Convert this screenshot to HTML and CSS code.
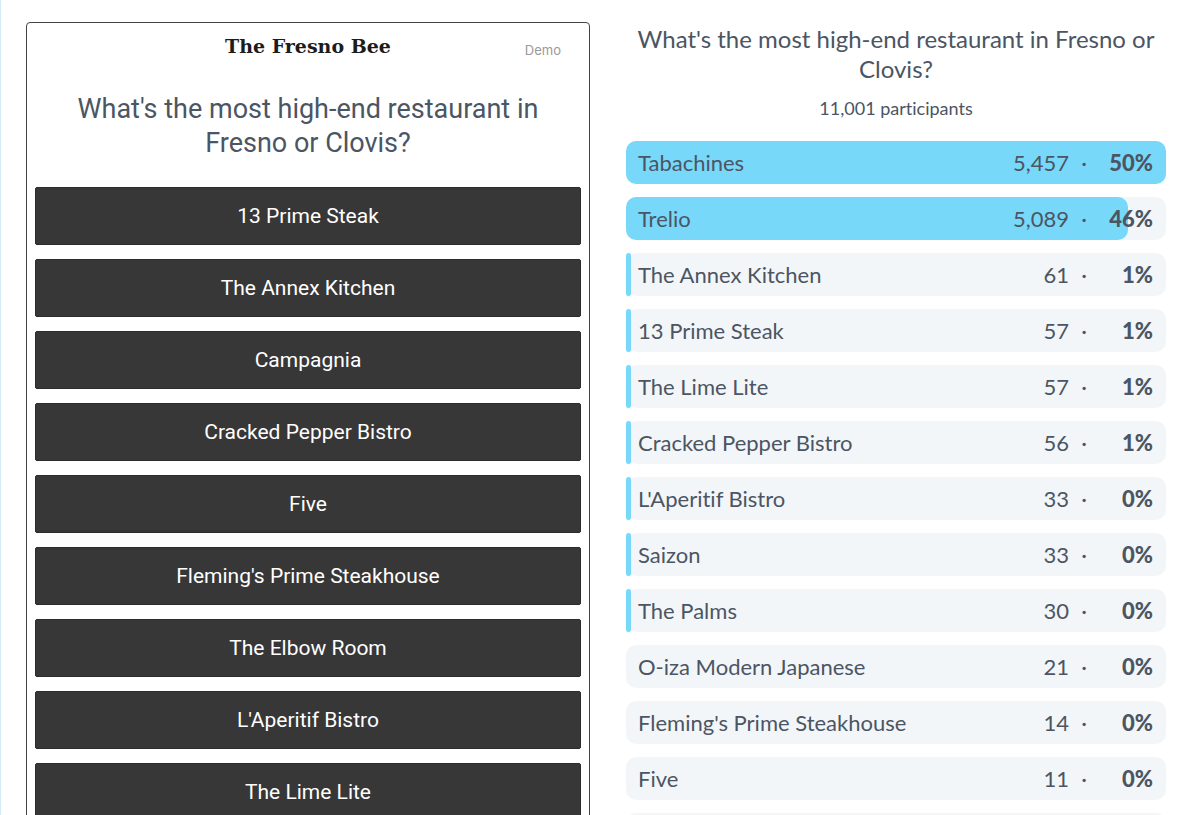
FILE: index.html
```html
<!DOCTYPE html>
<html lang="en">
<head>
  <meta charset="UTF-8">
  <meta name="viewport" content="width=device-width, initial-scale=1.0">
  <title>Poll results</title>
  <link rel="stylesheet" href="styles.css">
</head>
<body>
  <main class="page">
    <section class="poll">
      <header class="poll-header">
        <div class="brand">The Fresno Bee</div>
        <div class="tag">Demo</div>
      </header>
      <h1 class="question">What's the most high-end restaurant in Fresno or Clovis?</h1>
      <div class="options">
        <button type="button" class="option">13 Prime Steak</button>
        <button type="button" class="option">The Annex Kitchen</button>
        <button type="button" class="option">Campagnia</button>
        <button type="button" class="option">Cracked Pepper Bistro</button>
        <button type="button" class="option">Five</button>
        <button type="button" class="option">Fleming's Prime Steakhouse</button>
        <button type="button" class="option">The Elbow Room</button>
        <button type="button" class="option">L'Aperitif Bistro</button>
        <button type="button" class="option">The Lime Lite</button>
      </div>
    </section>

    <section class="results">
      <h2 class="title">What's the most high-end restaurant in Fresno or Clovis?</h2>
      <p class="participants">11,001 participants</p>
      <ol class="rows">
        <li class="row" style="--fill: 100%">
          <span class="name">Tabachines</span>
          <span class="votes">5,457</span>
          <span class="dot">·</span>
          <span class="percent">50%</span>
        </li>
        <li class="row" style="--fill: 93%">
          <span class="name">Trelio</span>
          <span class="votes">5,089</span>
          <span class="dot">·</span>
          <span class="percent">46%</span>
        </li>
        <li class="row" style="--fill: 1%">
          <span class="name">The Annex Kitchen</span>
          <span class="votes">61</span>
          <span class="dot">·</span>
          <span class="percent">1%</span>
        </li>
        <li class="row" style="--fill: 1%">
          <span class="name">13 Prime Steak</span>
          <span class="votes">57</span>
          <span class="dot">·</span>
          <span class="percent">1%</span>
        </li>
        <li class="row" style="--fill: 1%">
          <span class="name">The Lime Lite</span>
          <span class="votes">57</span>
          <span class="dot">·</span>
          <span class="percent">1%</span>
        </li>
        <li class="row" style="--fill: 1%">
          <span class="name">Cracked Pepper Bistro</span>
          <span class="votes">56</span>
          <span class="dot">·</span>
          <span class="percent">1%</span>
        </li>
        <li class="row" style="--fill: 1%">
          <span class="name">L'Aperitif Bistro</span>
          <span class="votes">33</span>
          <span class="dot">·</span>
          <span class="percent">0%</span>
        </li>
        <li class="row" style="--fill: 1%">
          <span class="name">Saizon</span>
          <span class="votes">33</span>
          <span class="dot">·</span>
          <span class="percent">0%</span>
        </li>
        <li class="row" style="--fill: 1%">
          <span class="name">The Palms</span>
          <span class="votes">30</span>
          <span class="dot">·</span>
          <span class="percent">0%</span>
        </li>
        <li class="row" style="--fill: 0%">
          <span class="name">O-iza Modern Japanese</span>
          <span class="votes">21</span>
          <span class="dot">·</span>
          <span class="percent">0%</span>
        </li>
        <li class="row" style="--fill: 0%">
          <span class="name">Fleming's Prime Steakhouse</span>
          <span class="votes">14</span>
          <span class="dot">·</span>
          <span class="percent">0%</span>
        </li>
        <li class="row" style="--fill: 0%">
          <span class="name">Five</span>
          <span class="votes">11</span>
          <span class="dot">·</span>
          <span class="percent">0%</span>
        </li>
        <li class="row" style="--fill: 0%"></li>
      </ol>
    </section>
  </main>
</body>
</html>
```
FILE: styles.css
```css
* {
  padding: 0;
  margin: 0;
  box-sizing: border-box;
}

body {
  background-color: #fff;
  color: #4b5563;
}

.page {
  display: grid;
  grid-template-columns: 47fr 45fr;
  gap: 36px;
  height: 100vh;
  overflow: hidden;
  padding: 22px 34px 0 25px;
  border-left: 1px solid #d3ecf7;
}

.poll {
  border: 1px solid #444;
  border-radius: 4px;
  padding: 8px;
  font-family: Roboto, sans-serif;

  & > .poll-header {
    display: grid;
    grid-template-columns: 1fr auto 1fr;
    align-items: center;
    height: 30px;
    padding: 0 20px;

    & > .brand {
      grid-column: 2;
      font-family: "DejaVu Serif", serif;
      font-size: 19px;
      font-weight: 700;
      color: #1c1c1c;
    }

    & > .tag {
      justify-self: end;
      padding-top: 8px;
      font-family: Inter, sans-serif;
      font-size: 13px;
      color: #999;
    }
  }

  & > .question {
    margin: 31px 0 27px;
    padding: 0 32px;
    font-size: 27px;
    font-weight: 400;
    line-height: 34px;
    text-align: center;
  }

  & > .options {
    display: flex;
    flex-direction: column;
    gap: 14px;

    & > .option {
      height: 58px;
      flex-shrink: 0;
      border: 1px solid #2b2b2b;
      border-radius: 2px;
      background-color: #373737;
      color: #fff;
      font-family: inherit;
      font-size: 21px;
    }
  }
}

.results {
  font-family: Lato, sans-serif;
  font-variant-ligatures: none;

  & > .title {
    padding-top: 2px;
    font-size: 24px;
    font-weight: 400;
    line-height: 30px;
    text-align: center;
  }

  & > .participants {
    margin: 12px 0 21px;
    font-size: 18px;
    line-height: 24px;
    text-align: center;
  }

  & > .rows {
    display: flex;
    flex-direction: column;
    gap: 13px;
    list-style: none;
  }

  .row {
    position: relative;
    z-index: 0;
    display: flex;
    align-items: center;
    flex-shrink: 0;
    height: 43px;
    padding: 0 13px 0 12px;
    border-radius: 10px;
    background-color: #f3f6f9;
    font-size: 22px;

    &::before {
      content: "";
      position: absolute;
      inset: 0 auto 0 0;
      z-index: -1;
      width: var(--fill);
      border-radius: 10px;
      background-color: #78d8f9;
    }

    & > .name {
      flex: 1;
    }

    & > .dot {
      width: 30px;
      text-align: center;
    }

    & > .percent {
      width: 54px;
      font-weight: 900;
      text-align: right;
    }
  }
}
```
